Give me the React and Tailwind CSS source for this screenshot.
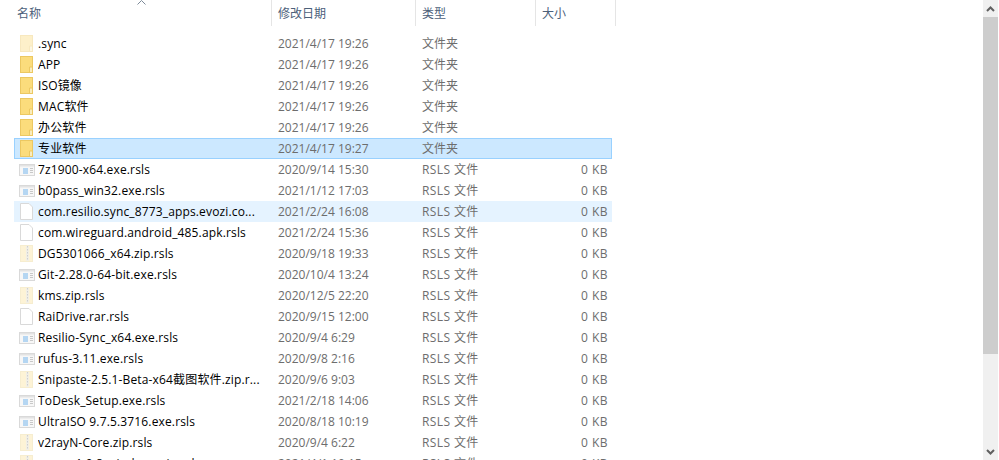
const rows = [
  { name: '.sync', date: '2021/4/17 19:26', type: '文件夹', icon: 'folder', faded: true },
  { name: 'APP', date: '2021/4/17 19:26', type: '文件夹', icon: 'folder' },
  { name: 'ISO镜像', date: '2021/4/17 19:26', type: '文件夹', icon: 'folder' },
  { name: 'MAC软件', date: '2021/4/17 19:26', type: '文件夹', icon: 'folder' },
  { name: '办公软件', date: '2021/4/17 19:26', type: '文件夹', icon: 'folder' },
  { name: '专业软件', date: '2021/4/17 19:27', type: '文件夹', icon: 'folder', state: 'selected' },
  { name: '7z1900-x64.exe.rsls', date: '2020/9/14 15:30', icon: 'exe' },
  { name: 'b0pass_win32.exe.rsls', date: '2021/1/12 17:03', icon: 'exe' },
  { name: 'com.resilio.sync_8773_apps.evozi.co...', date: '2021/2/24 16:08', icon: 'file', state: 'hover' },
  { name: 'com.wireguard.android_485.apk.rsls', date: '2021/2/24 15:36', icon: 'file' },
  { name: 'DG5301066_x64.zip.rsls', date: '2020/9/18 19:33', icon: 'zip' },
  { name: 'Git-2.28.0-64-bit.exe.rsls', date: '2020/10/4 13:24', icon: 'exe' },
  { name: 'kms.zip.rsls', date: '2020/12/5 22:20', icon: 'zip' },
  { name: 'RaiDrive.rar.rsls', date: '2020/9/15 12:00', icon: 'file' },
  { name: 'Resilio-Sync_x64.exe.rsls', date: '2020/9/4 6:29', icon: 'exe' },
  { name: 'rufus-3.11.exe.rsls', date: '2020/9/8 2:16', icon: 'exe' },
  { name: 'Snipaste-2.5.1-Beta-x64截图软件.zip.r...', date: '2020/9/6 9:03', icon: 'zip' },
  { name: 'ToDesk_Setup.exe.rsls', date: '2021/2/18 14:06', icon: 'exe' },
  { name: 'UltraISO 9.7.5.3716.exe.rsls', date: '2020/8/18 10:19', icon: 'exe' },
  { name: 'v2rayN-Core.zip.rsls', date: '2020/9/4 6:22', icon: 'zip' },
  { name: 'wesm-1.0.8-windows.zip.rsls', date: '2021/4/1 10:15', icon: 'zip' },
]

const FileIcon = ({ icon, faded }) => {
  if (icon === 'folder') {
    return (
      <svg width="13" height="17" viewBox="0 0 13 17" className={faded ? 'opacity-40' : ''}>
        <rect x="0.5" y="0.5" width="12" height="16" fill="#fbdc7c" stroke="#ecc862" />
        <rect x="10" y="11" width="2" height="5" fill="#f9ecbe" />
        <path d="M9.500 16v-5h3" fill="none" stroke="#ecc862" />
      </svg>
    )
  }
  if (icon === 'exe') {
    return (
      <svg width="16" height="12" viewBox="0 0 16 12">
        <rect x="0.5" y="0.5" width="15" height="11" fill="#f7f7f7" stroke="#d9d9d9" />
        <rect x="1" y="1" width="14" height="1.500" fill="#e3e3e3" />
        <rect x="4" y="4" width="5" height="6" fill="#b5d6f2" />
        <path d="M11 4.500h3M11 6.500h3M11 8.500h3" stroke="#c8c8c8" />
      </svg>
    )
  }
  if (icon === 'zip') {
    return (
      <svg width="13" height="17" viewBox="0 0 13 17">
        <rect x="0.5" y="0.5" width="12" height="16" fill="#fdf3d6" stroke="#f6edd0" />
        <rect x="6" y="1" width="3" height="15" fill="#f1efe6" />
        <path d="M7.500 1v15" stroke="#cfcfcf" strokeDasharray="1.500 1.500" />
      </svg>
    )
  }
  return (
    <svg width="13" height="17" viewBox="0 0 13 17">
      <path d="M.5.500h8.500l3.500 3.500v12.500h-12z" fill="#fff" stroke="#d9d9d9" />
    </svg>
  )
}

const Row = ({ row }) => {
  const bg =
    row.state === 'selected'
      ? 'bg-[#cce8ff] border border-[#99d1ff]'
      : row.state === 'hover'
        ? 'bg-[#e5f3ff] border border-[#e5f3ff]'
        : 'border border-transparent'
  return (
    <div className={`flex h-[21px] w-[598px] items-center leading-[19px] ${bg}`}>
      <div className="flex w-[23px] shrink-0 justify-center">
        <FileIcon icon={row.icon} faded={row.faded} />
      </div>
      <div className="w-[240px] shrink-0 overflow-hidden whitespace-nowrap tracking-[0.15px] text-black">{row.name}</div>
      <div className="w-[144px] shrink-0 text-[#6d6d6d]">{row.date}</div>
      {row.type ? (
        <div className="w-[120px] shrink-0 text-[#6d6d6d]">{row.type}</div>
      ) : (
        <>
          <div className="w-[120px] shrink-0 tracking-[0.4px] text-[#6d6d6d]">RSLS 文件</div>
          <div className="w-[66px] shrink-0 text-right tracking-[0.5px] text-[#6d6d6d]">0 KB</div>
        </>
      )}
    </div>
  )
}

const HeaderCell = ({ className, children }) => (
  <div className={`flex h-[26px] shrink-0 items-center border-r border-[#e5e5e5] pt-[1px] pl-[6px] ${className}`}>{children}</div>
)

export default function App() {
  return (
    <div
      className="flex h-[460px] w-[999px] overflow-hidden bg-white text-[12px] leading-[19px]"
      style={{ fontFamily: '"Open Sans", "Noto Sans CJK SC", sans-serif' }}
    >
      <div className="h-full w-[983px] overflow-hidden">
        <div className="relative flex h-[33px] items-start text-[#4c607a]">
          <svg className="absolute left-[137px] top-0" width="9" height="5" viewBox="0 0 9 5">
            <path d="M.5 4.500l4-4 4 4" fill="none" stroke="#7d8a99" />
          </svg>
          <HeaderCell className="w-[272px] pl-[17px]">名称</HeaderCell>
          <HeaderCell className="w-[144px]">修改日期</HeaderCell>
          <HeaderCell className="w-[120px]">类型</HeaderCell>
          <HeaderCell className="w-[80px]">大小</HeaderCell>
        </div>
        <div className="pl-[14px]">
          {rows.map((row) => (
            <Row key={row.name} row={row} />
          ))}
        </div>
      </div>
      <div className="flex h-full w-[15px] shrink-0 flex-col bg-[#f0f0f0]">
        <div className="flex h-[17px] items-center justify-center">
          <svg width="9" height="6" viewBox="0 0 9 6">
            <path d="M1 5l3.500-3.500L8 5" fill="none" stroke="#606060" strokeWidth="2" />
          </svg>
        </div>
        <div className="h-[337px] bg-[#cdcdcd]" />
        <div className="flex flex-1 items-end justify-center pb-[5px]">
          <svg width="9" height="6" viewBox="0 0 9 6">
            <path d="M1 1l3.500 3.500L8 1" fill="none" stroke="#606060" strokeWidth="2" />
          </svg>
        </div>
      </div>
    </div>
  )
}
